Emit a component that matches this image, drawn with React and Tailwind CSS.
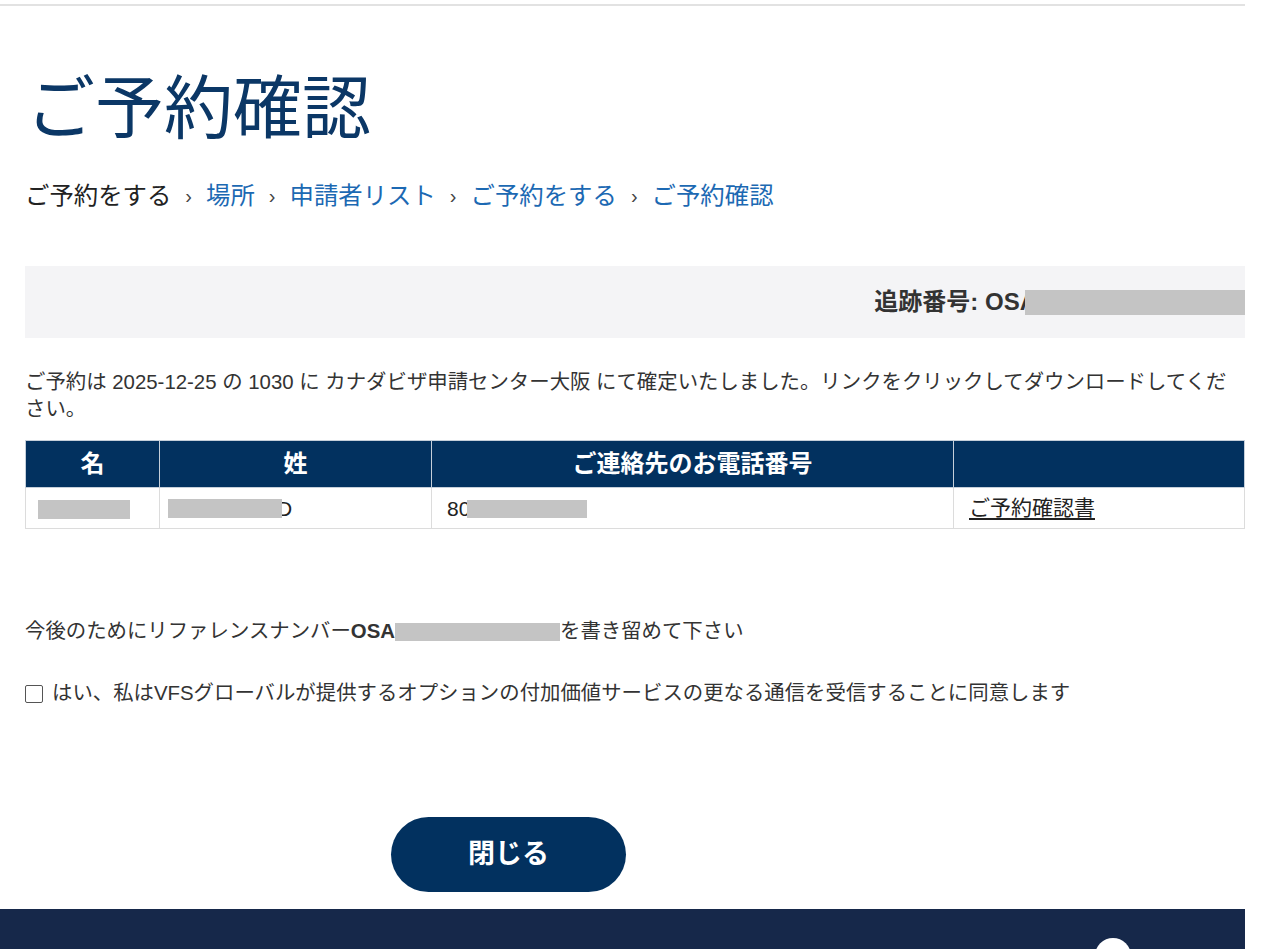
import React from "react";

const FONT = "font-['Liberation_Sans','Noto_Sans_CJK_JP',sans-serif]";

function Redact({ w, h = 19, className = "" }) {
  return (
    <span
      className={`inline-block bg-[#c4c4c4] align-middle ${className}`}
      style={{ width: w, height: h }}
    />
  );
}

function Sep() {
  return <span className="mx-[14px] text-[20px] text-[#444]">›</span>;
}

export default function App() {
  return (
    <div className={`w-[1245px] min-h-[949px] bg-white text-[#333] ${FONT}`}>
      <div className="h-[6px] border-b-2 border-[#e2e2e2]" />
      <div className="pl-[25px]">
        <h1 className="mt-[62px] pl-[1px] text-[69px] leading-[83px] font-normal text-[#0b3766]">
          ご予約確認
        </h1>

        <nav className="mt-[29px] flex items-center text-[24.4px] leading-[32px]">
          <span className="text-[#222]">ご予約をする</span>
          <Sep />
          <a className="text-[#1c69b3]">場所</a>
          <Sep />
          <a className="text-[#1c69b3]">申請者リスト</a>
          <Sep />
          <a className="text-[#1c69b3]">ご予約をする</a>
          <Sep />
          <a className="text-[#1c69b3]">ご予約確認</a>
        </nav>

        <div className="mt-[54px] flex h-[72px] items-center justify-end bg-[#f4f4f6]">
          <span className="text-[24px] font-semibold text-[#333]">
            追跡番号: OSA
          </span>
          <Redact w={220} h={25} className="-ml-[12px]" />
        </div>

        <p className="mt-[31px] pr-[18px] text-[20.4px] leading-[27px] text-[#333]">
          ご予約は 2025-12-25 の 1030 に カナダビザ申請センター大阪 にて確定いたしました。リンクをクリックしてダウンロードしてください。
        </p>

        <table className="mt-[17px] w-[1220px] border-collapse">
          <thead>
            <tr className="h-[47px] bg-[#02315f] text-[24px] font-bold text-white">
              <th className="w-[134px] border border-[#c5cfda] font-bold">名</th>
              <th className="w-[272px] border border-[#c5cfda] font-bold">姓</th>
              <th className="w-[522px] border border-[#c5cfda] font-bold">
                ご連絡先のお電話番号
              </th>
              <th className="border border-[#c5cfda]" />
            </tr>
          </thead>
          <tbody>
            <tr className="h-[41px] text-[21px] text-[#222]">
              <td className="border border-[#dcdcdc] pl-[12px]">
                <Redact w={92} />
              </td>
              <td className="border border-[#dcdcdc] pl-[8px]">
                <Redact w={114} className="relative z-10 -mr-[5px]" />
                <span className="align-middle">D</span>
              </td>
              <td className="border border-[#dcdcdc] pl-[15px]">
                <span className="align-middle">80</span>
                <Redact w={120} h={18} className="-ml-[3px]" />
              </td>
              <td className="border border-[#dcdcdc] pl-[15px]">
                <a className="underline underline-offset-[3px]">ご予約確認書</a>
              </td>
            </tr>
          </tbody>
        </table>

        <p className="mt-[89px] flex items-center text-[20.4px] leading-[27px] text-[#333]">
          <span>今後のためにリファレンスナンバー</span>
          <span className="font-bold">OSA</span>
          <Redact w={165} h={18} />
          <span>を書き留めて下さい</span>
        </p>

        <label className="mt-[35px] flex items-center text-[20.4px] leading-[27px] text-[#333]">
          <span className="mr-[9px] inline-block h-[18px] w-[18px] rounded-[2px] border border-[#555] bg-white" />
          <span>はい、私はVFSグローバルが提供するオプションの付加価値サービスの更なる通信を受信することに同意します</span>
        </label>

        <button className="mt-[110px] ml-[366px] flex h-[75px] w-[235px] items-center justify-center rounded-full bg-[#02315f] text-[27px] font-bold text-white">
          閉じる
        </button>
      </div>

      <footer className="mt-[17px] flex h-[60px] justify-end bg-[#16284a] pr-[114px] pt-[29px]">
        <span className="block h-[36px] w-[36px] rounded-full bg-white" />
      </footer>
    </div>
  );
}
